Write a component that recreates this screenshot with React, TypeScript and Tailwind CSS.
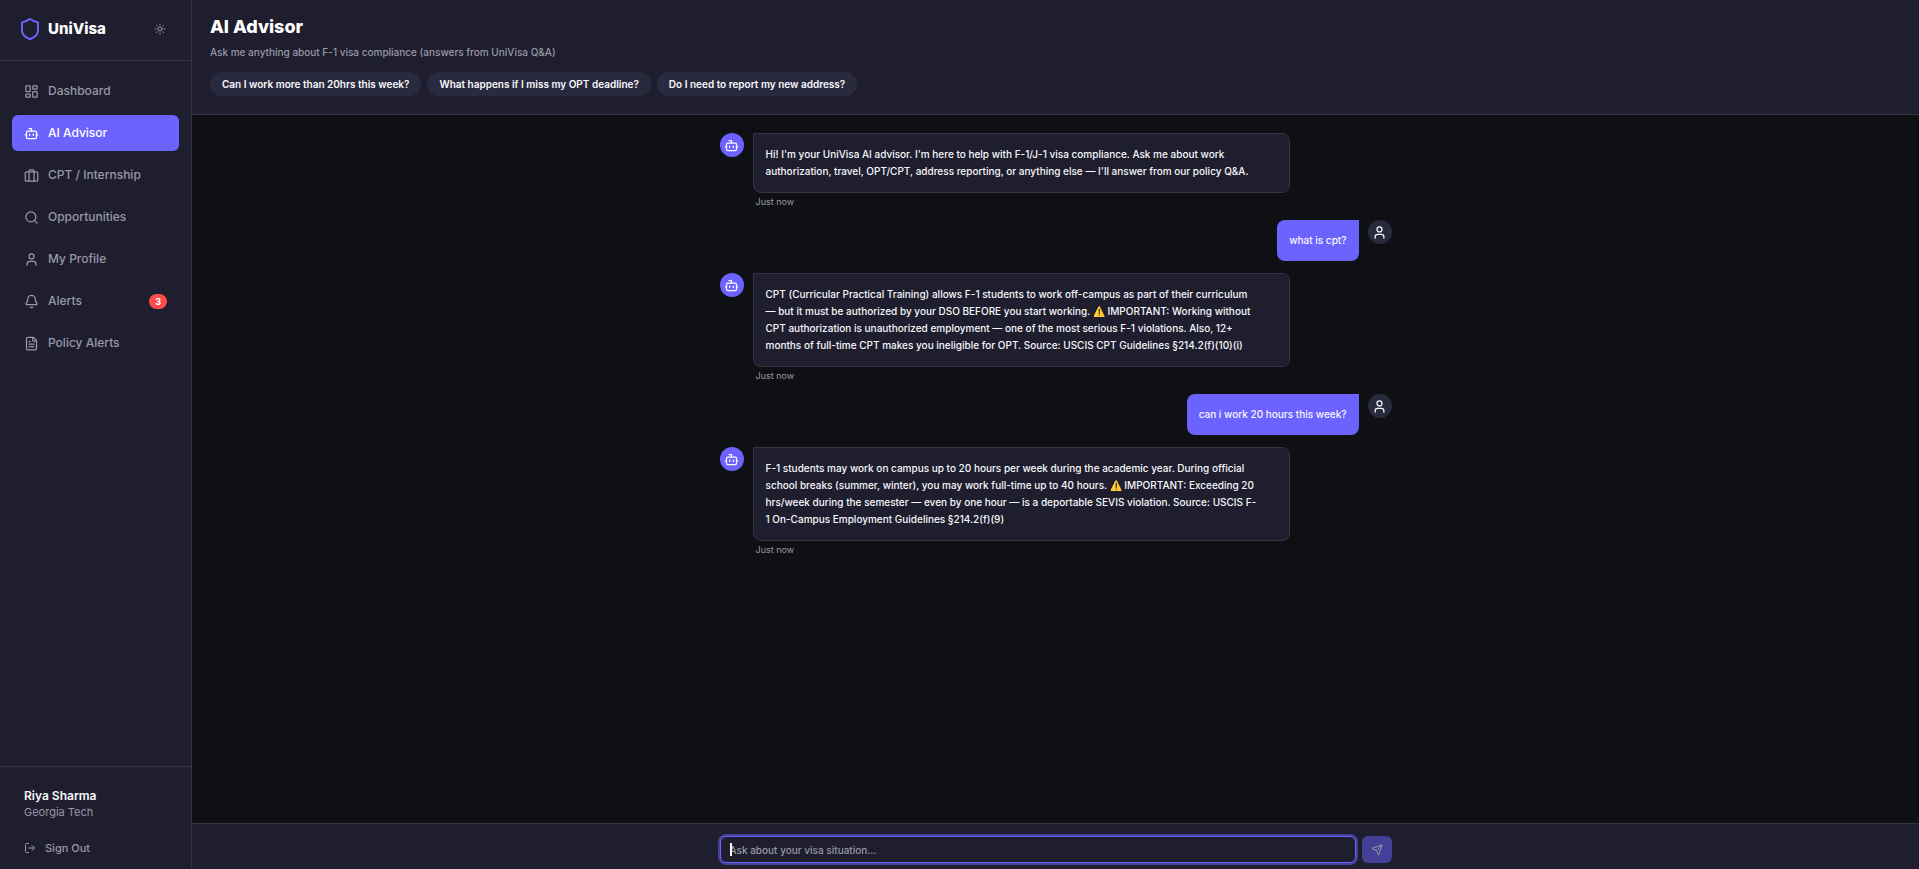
import { useState } from "react";
import {
  Bell,
  Bot,
  FileText,
  LayoutDashboard,
  LogOut,
  Search,
  Send,
  Shield,
  Sun,
  User,
  type LucideIcon,
} from "lucide-react";

interface NavItem {
  label: string;
  icon: LucideIcon;
  badge?: number;
}

interface Message {
  id: number;
  role: "bot" | "user";
  text: string;
}

function Suitcase({ className }: { className?: string }) {
  return (
    <svg
      viewBox="0 0 24 24"
      fill="none"
      stroke="currentColor"
      strokeWidth="2"
      strokeLinecap="round"
      strokeLinejoin="round"
      className={className}
    >
      <rect x="2" y="6" width="20" height="15" rx="2" />
      <path d="M8 21V5a2 2 0 0 1 2-2h4a2 2 0 0 1 2 2v16" />
    </svg>
  );
}

const navItems: NavItem[] = [
  { label: "Dashboard", icon: LayoutDashboard },
  { label: "AI Advisor", icon: Bot },
  { label: "CPT / Internship", icon: Suitcase as LucideIcon },
  { label: "Opportunities", icon: Search },
  { label: "My Profile", icon: User },
  { label: "Alerts", icon: Bell, badge: 3 },
  { label: "Policy Alerts", icon: FileText },
];

const suggestions = [
  "Can I work more than 20hrs this week?",
  "What happens if I miss my OPT deadline?",
  "Do I need to report my new address?",
];

const messages: Message[] = [
  {
    id: 1,
    role: "bot",
    text: "Hi! I'm your UniVisa AI advisor. I'm here to help with F-1/J-1 visa compliance. Ask me about work authorization, travel, OPT/CPT, address reporting, or anything else — I'll answer from our policy Q&A.",
  },
  { id: 2, role: "user", text: "what is cpt?" },
  {
    id: 3,
    role: "bot",
    text: "CPT (Curricular Practical Training) allows F-1 students to work off-campus as part of their curriculum — but it must be authorized by your DSO BEFORE you start working. ⚠️ IMPORTANT: Working without CPT authorization is unauthorized employment — one of the most serious F-1 violations. Also, 12+ months of full-time CPT makes you ineligible for OPT. Source: USCIS CPT Guidelines §214.2(f)(10)(i)",
  },
  { id: 4, role: "user", text: "can i work 20 hours this week?" },
  {
    id: 5,
    role: "bot",
    text: "F-1 students may work on campus up to 20 hours per week during the academic year. During official school breaks (summer, winter), you may work full-time up to 40 hours. ⚠️ IMPORTANT: Exceeding 20 hrs/week during the semester — even by one hour — is a deportable SEVIS violation. Source: USCIS F-\u200b1 On-Campus Employment Guidelines §214.2(f)(9)",
  },
];

export default function App() {
  const [active, setActive] = useState("AI Advisor");
  const [input, setInput] = useState("");

  return (
    <div className="flex h-screen bg-[#0f1014] font-['Inter',sans-serif] text-[10px] font-medium text-[#f8f8fb]">
      {/* Sidebar */}
      <aside className="flex w-48 shrink-0 flex-col border-r border-[#353443] bg-[#1e1e2e]">
        <div className="flex h-[61px] items-center justify-between border-b border-[#353443] pb-0.5 pl-[18px] pr-[25px]">
          <div className="flex items-center gap-1.5">
            <Shield className="h-6 w-6 text-[#6c63ff]" />
            <span className="text-[15px] font-extrabold text-white">UniVisa</span>
          </div>
          <button aria-label="Toggle theme" className="text-[#9998a6]">
            <Sun className="h-3 w-3" />
          </button>
        </div>

        <nav className="flex flex-1 flex-col gap-1.5 p-3">
          {navItems.map(({ label, icon: Icon, badge }) => (
            <button
              key={label}
              onClick={() => setActive(label)}
              className={`flex h-9 items-center gap-[9px] rounded-md px-3 text-xs ${
                active === label ? "bg-[#6c63ff] text-white" : "text-[#9998a6]"
              }`}
            >
              <Icon className="h-[15px] w-[15px]" />
              <span>{label}</span>
              {badge && (
                <span className="ml-auto rounded-full bg-[#ff4d4f] px-1.5 text-[9px] font-bold leading-[15px] text-white">
                  {badge}
                </span>
              )}
            </button>
          ))}
        </nav>

        <div className="border-t border-[#353443] px-6 pb-[9px] pt-[21px] text-[11px]">
          <p className="text-xs font-semibold leading-4">Riya Sharma</p>
          <p className="font-normal leading-4 text-[#9998a6]">Georgia Tech</p>
          <button className="mt-4 flex h-6 items-center gap-[9px] text-[#9998a6]">
            <LogOut className="h-3 w-3" />
            Sign Out
          </button>
        </div>
      </aside>

      <main className="flex min-w-0 flex-1 flex-col">
        {/* Header */}
        <header className="border-b border-[#353443] bg-[#1e1e2e] px-[18px] pb-[18px] pt-[15px]">
          <h1 className="text-lg font-extrabold leading-6 text-white">AI Advisor</h1>
          <p className="mt-[5px] leading-4 text-[#9998a6]">
            Ask me anything about F-1 visa compliance (answers from UniVisa Q&A)
          </p>
          <div className="mt-3 flex gap-1.5">
            {suggestions.map((s) => (
              <button
                key={s}
                onClick={() => setInput(s)}
                className="h-6 rounded-full bg-[#2a2a3e] px-3 font-semibold"
              >
                {s}
              </button>
            ))}
          </div>
        </header>

        {/* Conversation */}
        <div className="flex-1 overflow-y-auto pt-[18px]">
          <div className="mx-auto flex max-w-2xl flex-col gap-3">
            {messages.map((m) =>
              m.role === "bot" ? (
                <div key={m.id} className="flex gap-[9px]">
                  <div className="flex h-6 w-6 shrink-0 items-center justify-center rounded-full bg-[#6c63ff]">
                    <Bot className="h-[15px] w-[15px]" />
                  </div>
                  <div className="max-w-4/5">
                    <p className="rounded-lg rounded-tl-none border border-[#353443] bg-[#1e1e2e] py-3 pl-3 pr-8 leading-[17px]">
                      {m.text}
                    </p>
                    <p className="ml-[3px] mt-[3px] text-[9px] font-normal leading-3 text-[#9998a6]">Just now</p>
                  </div>
                </div>
              ) : (
                <div key={m.id} className="flex justify-end gap-[9px]">
                  <p className="rounded-lg rounded-tr-none bg-[#6c63ff] p-3 leading-[17px]">{m.text}</p>
                  <div className="flex h-6 w-6 shrink-0 items-center justify-center rounded-full bg-[#2a2a3e]">
                    <User className="h-[15px] w-[15px]" />
                  </div>
                </div>
              )
            )}
          </div>
        </div>

        {/* Composer */}
        <div className="border-t border-[#353443] bg-[#1e1e2e] pb-1.5 pt-3">
          <form className="mx-auto flex max-w-2xl gap-1.5" onSubmit={(e) => e.preventDefault()}>
            <div className="relative min-w-0 flex-1">
              <input
                autoFocus
                aria-label="Ask about your visa situation"
                placeholder="Ask about your visa situation..."
                value={input}
                onChange={(e) => setInput(e.target.value)}
                className="h-[27px] w-full rounded-md border border-[#6c63ff] bg-[#1e1e2e] px-[9px] outline-none ring-2 ring-[#6c63ff]/50 placeholder:text-[#9998a6] placeholder-shown:caret-transparent"
              />
              {!input && <span className="absolute left-2.5 top-[7px] h-[13px] w-0.5 bg-white" />}
            </div>
            <button
              aria-label="Send"
              disabled={!input}
              className="flex h-[27px] w-[30px] items-center justify-center rounded-md bg-[#6c63ff] disabled:bg-[#454097] disabled:text-[#9998a6]"
            >
              <Send className="h-3 w-3" />
            </button>
          </form>
        </div>
      </main>
    </div>
  );
}
